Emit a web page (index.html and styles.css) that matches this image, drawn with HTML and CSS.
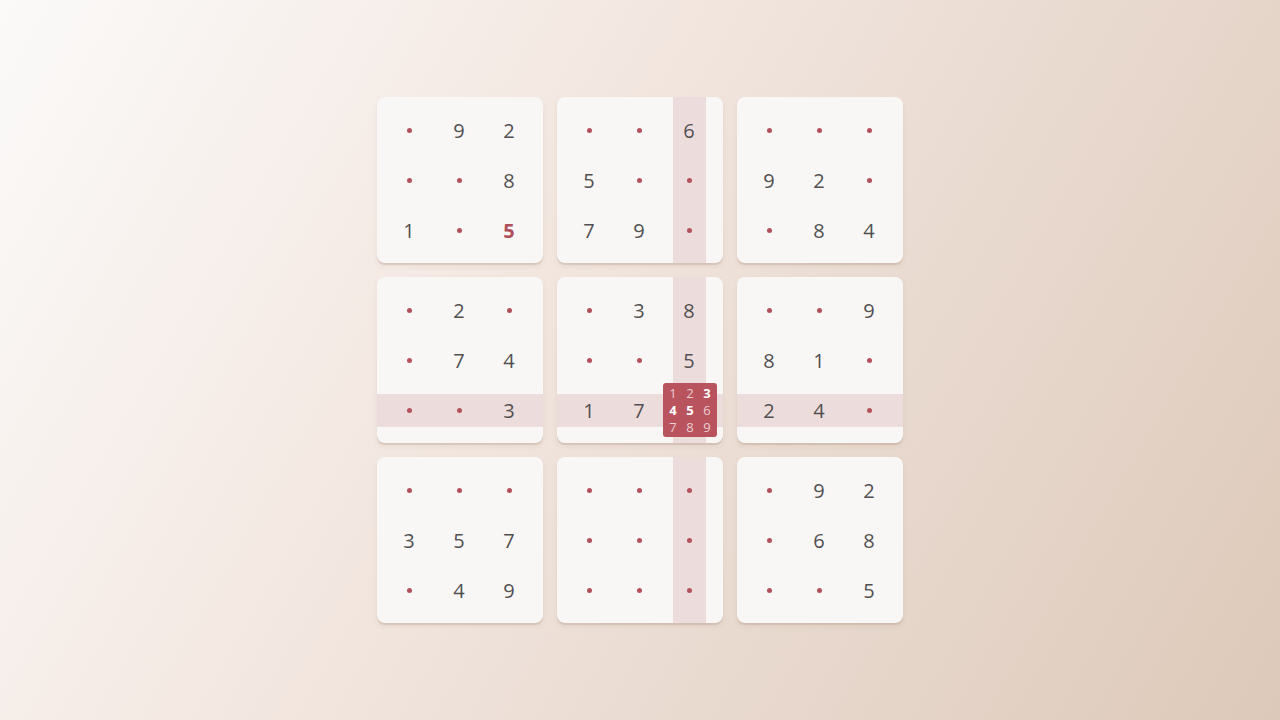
FILE: index.html
```html
<!DOCTYPE html>
<html>
<head>
<meta charset="utf-8">
<link rel="stylesheet" href="styles.css">
</head>
<body>
<div class="board">
  <div class="box">
    <div class="cells">
      <span class="dot"></span><span class="n">9</span><span class="n">2</span>
      <span class="dot"></span><span class="dot"></span><span class="n">8</span>
      <span class="n">1</span><span class="dot"></span><span class="n err">5</span>
    </div>
  </div>
  <div class="box">
    <div class="band-col"></div>
    <div class="cells">
      <span class="dot"></span><span class="dot"></span><span class="n">6</span>
      <span class="n">5</span><span class="dot"></span><span class="dot"></span>
      <span class="n">7</span><span class="n">9</span><span class="dot"></span>
    </div>
  </div>
  <div class="box">
    <div class="cells">
      <span class="dot"></span><span class="dot"></span><span class="dot"></span>
      <span class="n">9</span><span class="n">2</span><span class="dot"></span>
      <span class="dot"></span><span class="n">8</span><span class="n">4</span>
    </div>
  </div>

  <div class="box">
    <div class="band-row"></div>
    <div class="cells">
      <span class="dot"></span><span class="n">2</span><span class="dot"></span>
      <span class="dot"></span><span class="n">7</span><span class="n">4</span>
      <span class="dot"></span><span class="dot"></span><span class="n">3</span>
    </div>
  </div>
  <div class="box">
    <div class="band-col"></div>
    <div class="band-row"></div>
    <div class="cells">
      <span class="dot"></span><span class="n">3</span><span class="n">8</span>
      <span class="dot"></span><span class="dot"></span><span class="n">5</span>
      <span class="n">1</span><span class="n">7</span>
      <span class="sel">
        <i>1</i><i>2</i><i class="on">3</i>
        <i class="on">4</i><i class="on">5</i><i>6</i>
        <i>7</i><i>8</i><i>9</i>
      </span>
    </div>
  </div>
  <div class="box">
    <div class="band-row"></div>
    <div class="cells">
      <span class="dot"></span><span class="dot"></span><span class="n">9</span>
      <span class="n">8</span><span class="n">1</span><span class="dot"></span>
      <span class="n">2</span><span class="n">4</span><span class="dot"></span>
    </div>
  </div>

  <div class="box">
    <div class="cells">
      <span class="dot"></span><span class="dot"></span><span class="dot"></span>
      <span class="n">3</span><span class="n">5</span><span class="n">7</span>
      <span class="dot"></span><span class="n">4</span><span class="n">9</span>
    </div>
  </div>
  <div class="box">
    <div class="band-col"></div>
    <div class="cells">
      <span class="dot"></span><span class="dot"></span><span class="dot"></span>
      <span class="dot"></span><span class="dot"></span><span class="dot"></span>
      <span class="dot"></span><span class="dot"></span><span class="dot"></span>
    </div>
  </div>
  <div class="box">
    <div class="cells">
      <span class="dot"></span><span class="n">9</span><span class="n">2</span>
      <span class="dot"></span><span class="n">6</span><span class="n">8</span>
      <span class="dot"></span><span class="dot"></span><span class="n">5</span>
    </div>
  </div>
</div>
</body>
</html>
```

FILE: styles.css
```css
html, body {
  margin: 0;
  height: 100%;
}
body {
  width: 1280px;
  height: 720px;
  overflow: hidden;
  background: linear-gradient(120deg, #fbfaf9 0%, #f4e9e3 35%, #e9dad0 65%, #ddc9b9 100%);
  font-family: "Open Sans", "Noto Sans", sans-serif;
  display: flex;
  align-items: center;
  justify-content: center;
}
.board {
  display: grid;
  grid-template-columns: repeat(3, 166px);
  grid-template-rows: repeat(3, 166px);
  gap: 14px;
}
.box {
  display: grid;
  grid-template-columns: 7px 50px 50px 50px 9px;
  grid-template-rows: 8px 50px 50px 50px 8px;
  background: #f8f7f6;
  border-radius: 8px;
  overflow: hidden;
  box-shadow: 0 2px 0 rgba(170, 140, 120, 0.25), 0 3px 5px rgba(150, 120, 100, 0.12);
}
.band-col {
  grid-column: 4;
  grid-row: 1 / -1;
  justify-self: center;
  width: 33px;
  background: #eddcdc;
}
.band-row {
  grid-row: 4;
  grid-column: 1 / -1;
  align-self: center;
  height: 33px;
  background: #eddcdc;
}
.cells {
  grid-column: 2 / 5;
  grid-row: 2 / 5;
  display: grid;
  grid-template-columns: repeat(3, 50px);
  grid-template-rows: repeat(3, 50px);
}
.cells > span {
  display: flex;
  align-items: center;
  justify-content: center;
}
.n {
  font-size: 20px;
  color: #525050;
  line-height: 1;
  padding-top: 1px;
}
.n.err {
  color: #b0505a;
  font-weight: 700;
}
.dot::before {
  content: "";
  width: 5px;
  height: 5px;
  border-radius: 50%;
  background: #b3525b;
}
.cells > .sel {
  margin: -2px -3px -2px -1px;
  width: 54px;
  height: 54px;
  background: #b9535e;
  border-radius: 3px;
  display: grid;
  grid-template-columns: repeat(3, 17px);
  grid-template-rows: repeat(3, 17px);
  align-content: center;
  justify-content: center;
}
.sel i {
  font-style: normal;
  font-size: 13px;
  line-height: 17px;
  text-align: center;
  color: rgba(255, 255, 255, 0.72);
}
.sel i.on {
  color: #ffffff;
  font-weight: 700;
}
```
